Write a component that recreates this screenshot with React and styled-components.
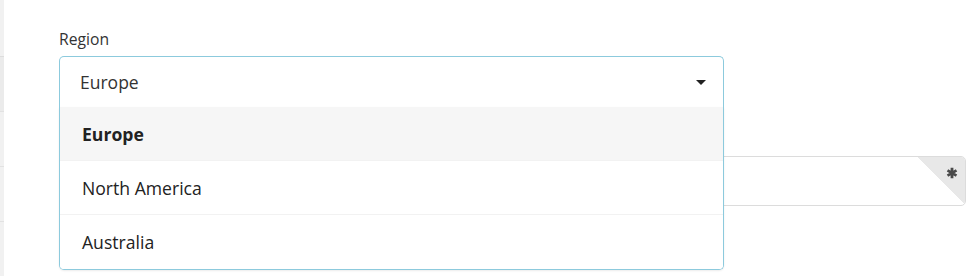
import React, { useState } from 'react';
import styled, { createGlobalStyle } from 'styled-components';

const GlobalStyle = createGlobalStyle`
  html, body {
    margin: 0;
    padding: 0;
    background: #fff;
    font-family: "Open Sans", "Liberation Sans", sans-serif;
    color: #333;
  }
`;

const regions = ['Europe', 'North America', 'Australia'];

const App = () => {
  const [value, setValue] = useState('Europe');
  const [open, setOpen] = useState(true);

  return <Page>
    <GlobalStyle />
    <Rail>
      <RailCell />
      <RailCell active />
      <RailCell />
      <RailCell />
      <RailCell />
    </Rail>

    <Content>
      <Label>Region</Label>
      <SelectWrap>
        <Control open={open} onClick={() => setOpen(!open)}>
          <span>{value}</span>
          <Caret />
        </Control>
        {open && <Menu>
          {regions.map((r) => <Option
            key={r}
            selected={r === value}
            onClick={() => { setValue(r); setOpen(false); }}
          >
            {r}
          </Option>)}
        </Menu>}
      </SelectWrap>

      <InputWrap>
        <Input />
        <Required>
          <Star viewBox="0 0 12 12">
            <path d="M6 0.8 V11.2 M1.5 3.4 L10.5 8.6 M1.5 8.6 L10.5 3.4" />
          </Star>
        </Required>
      </InputWrap>
    </Content>
  </Page>
}

const Page = styled.div`
  display: flex;
  width: 979px;
  height: 276px;
  overflow: hidden;
`;

const Rail = styled.div`
  display: flex;
  flex-direction: column;
  width: 4px;
  flex: 0 0 4px;
  background: #f1f1f1;
`;

const RailCell = styled.div`
  height: 55px;
  flex: 0 0 55px;
  border-top: 1px solid ${(p) => (p.active ? '#dddddd' : '#e2e2e2')};
  background: ${(p) => (p.active ? '#ebebeb' : '#f1f1f1')};
  box-sizing: border-box;
  &:first-child {
    height: 56px;
    flex-basis: 56px;
    border-top: none;
  }
`;

const Content = styled.div`
  flex: 1;
  padding: 29px 14px 0 55px;
  display: flex;
  flex-direction: column;
`;

const Label = styled.label`
  font-size: 15.7px;
  line-height: 20px;
  color: #333;
  margin-bottom: 7px;
`;

const SelectWrap = styled.div`
  position: relative;
  width: 665px;
  z-index: 2;
`;

const Control = styled.div`
  display: flex;
  align-items: center;
  justify-content: space-between;
  height: 51px;
  box-sizing: border-box;
  padding: 0 17px 0 20px;
  border: 1px solid #8ccadd;
  border-bottom: ${(p) => (p.open ? 'none' : '1px solid #8ccadd')};
  border-radius: ${(p) => (p.open ? '5px 5px 0 0' : '5px')};
  background: #fff;
  font-size: 17.5px;
  color: #333;
  cursor: pointer;
`;

const Caret = styled.span`
  width: 0;
  height: 0;
  border-left: 5px solid transparent;
  border-right: 5px solid transparent;
  border-top: 5px solid #222;
`;

const Menu = styled.div`
  position: absolute;
  top: 100%;
  left: 0;
  right: 0;
  background: #fff;
  border: 1px solid #8ccadd;
  border-top: none;
  border-radius: 0 0 5px 5px;
  box-shadow: 0 1px 2px rgba(0, 0, 0, 0.08);
  overflow: hidden;
`;

const Option = styled.div`
  display: flex;
  align-items: center;
  height: 54px;
  box-sizing: border-box;
  padding: 0 22px;
  font-size: 17.6px;
  color: #222;
  font-weight: ${(p) => (p.selected ? 700 : 400)};
  background: ${(p) => (p.selected ? '#f6f6f6' : '#fff')};
  border-bottom: 1px solid #f2f2f2;
  cursor: pointer;
  &:last-child {
    border-bottom: none;
  }
`;

const InputWrap = styled.div`
  position: relative;
  margin-top: 49px;
  margin-right: -1px;
  height: 50px;
  border: 1px solid #dcdcdc;
  border-radius: 5px;
  box-sizing: border-box;
  overflow: hidden;
  z-index: 1;
`;

const Input = styled.input`
  width: 100%;
  height: 100%;
  border: none;
  outline: none;
  box-sizing: border-box;
  padding: 0 60px 0 20px;
  font-family: inherit;
  font-size: 17px;
  background: transparent;
`;

const Required = styled.div`
  position: absolute;
  top: 0;
  right: 0;
  width: 48px;
  height: 48px;
  background: linear-gradient(to bottom left, #e8e8e8 50%, transparent 50%);
`;

const Star = styled.svg`
  position: absolute;
  top: 10px;
  right: 7px;
  width: 12px;
  height: 12px;
  stroke: #4a4a4a;
  stroke-width: 2.8;
  fill: none;
`;

export default App;
